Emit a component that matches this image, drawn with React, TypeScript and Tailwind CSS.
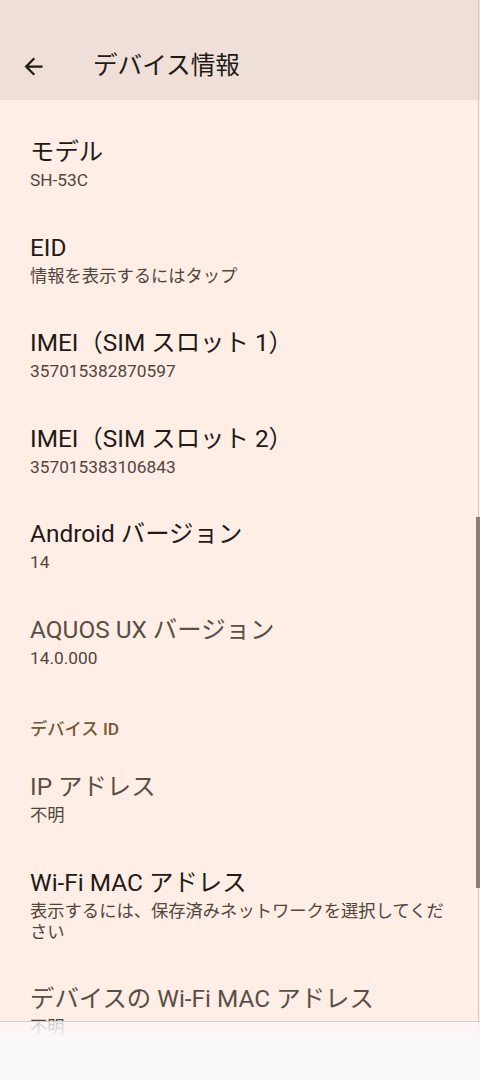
// DeviceInfo - Android settings "デバイス情報" screen
const font = { fontFamily: "Roboto, 'Noto Sans CJK JP', sans-serif" };

interface InfoItem {
    title: string;
    summary: string;
    dim?: boolean;
}

const topItems: InfoItem[] = [
    { title: 'モデル', summary: 'SH-53C' },
    { title: 'EID', summary: '情報を表示するにはタップ' },
    { title: 'IMEI（SIM スロット 1）', summary: '357015382870597' },
    { title: 'IMEI（SIM スロット 2）', summary: '357015383106843' },
    { title: 'Android バージョン', summary: '14' },
    { title: 'AQUOS UX バージョン', summary: '14.0.000', dim: true },
];

const idItems: InfoItem[] = [
    { title: 'IP アドレス', summary: '不明', dim: true },
    { title: 'Wi-Fi MAC アドレス', summary: '表示するには、保存済みネットワークを選択してください' },
    { title: 'デバイスの Wi-Fi MAC アドレス', summary: '不明', dim: true },
];

const ArrowBack = () => (
    <svg width="27" height="27" viewBox="0 0 24 24" fill="#221a15">
        <path d="M20 11H7.83l5.59-5.59L12 4l-8 8 8 8 1.41-1.41L7.83 13H20v-2z" />
    </svg>
);

const Row = ({ item }: { item: InfoItem }) => (
    <div className="pl-[30px] pr-[34px] pt-[20px] pb-[20.5px]">
        <div className={`text-[24.4px] leading-[32px] ${item.dim ? 'text-[#5a4e48]' : 'text-[#221a15]'}`}>
            {item.title}
        </div>
        <div className="mt-[2px] text-[17.3px] leading-[21px] text-[#52453d]">{item.summary}</div>
    </div>
);

export default function App() {
    return (
        <div className="relative h-[1080px] w-[480px] overflow-hidden bg-[#feeee5]" style={font}>
            {/* Top app bar */}
            <div className="flex h-[100px] items-center bg-[#eee0d9] pt-[32px]">
                <div className="ml-[20px] flex h-[27px] w-[27px] items-center justify-center">
                    <ArrowBack />
                </div>
                <h1 className="ml-[46px] text-[24.6px] leading-[32px] text-[#221a15]">デバイス情報</h1>
            </div>

            {/* List */}
            <div className="pt-[16px]">
                {topItems.map((item) => (
                    <Row key={item.title} item={item} />
                ))}
                <div className="pl-[30px] pt-[28px] pb-[10px] text-[17.3px] font-medium leading-[24px] text-[#7a5630]">
                    デバイス ID
                </div>
                {idItems.map((item) => (
                    <Row key={item.title} item={item} />
                ))}
            </div>

            {/* Right edge + scrollbar */}
            <div className="absolute right-[1px] top-0 h-full w-[1px] bg-[#d6c9c3]" />
            <div className="absolute right-0 top-[517px] h-[371px] w-[4px] bg-[#8f7e78]" />

            {/* Bottom bar */}
            <div className="absolute bottom-0 left-0 h-[59px] w-full border-t border-[#d8cdc8] bg-linear-to-b from-[#fbf8f8]/75 from-0% to-[#fbf8f8] to-[35%]" />
        </div>
    );
}
